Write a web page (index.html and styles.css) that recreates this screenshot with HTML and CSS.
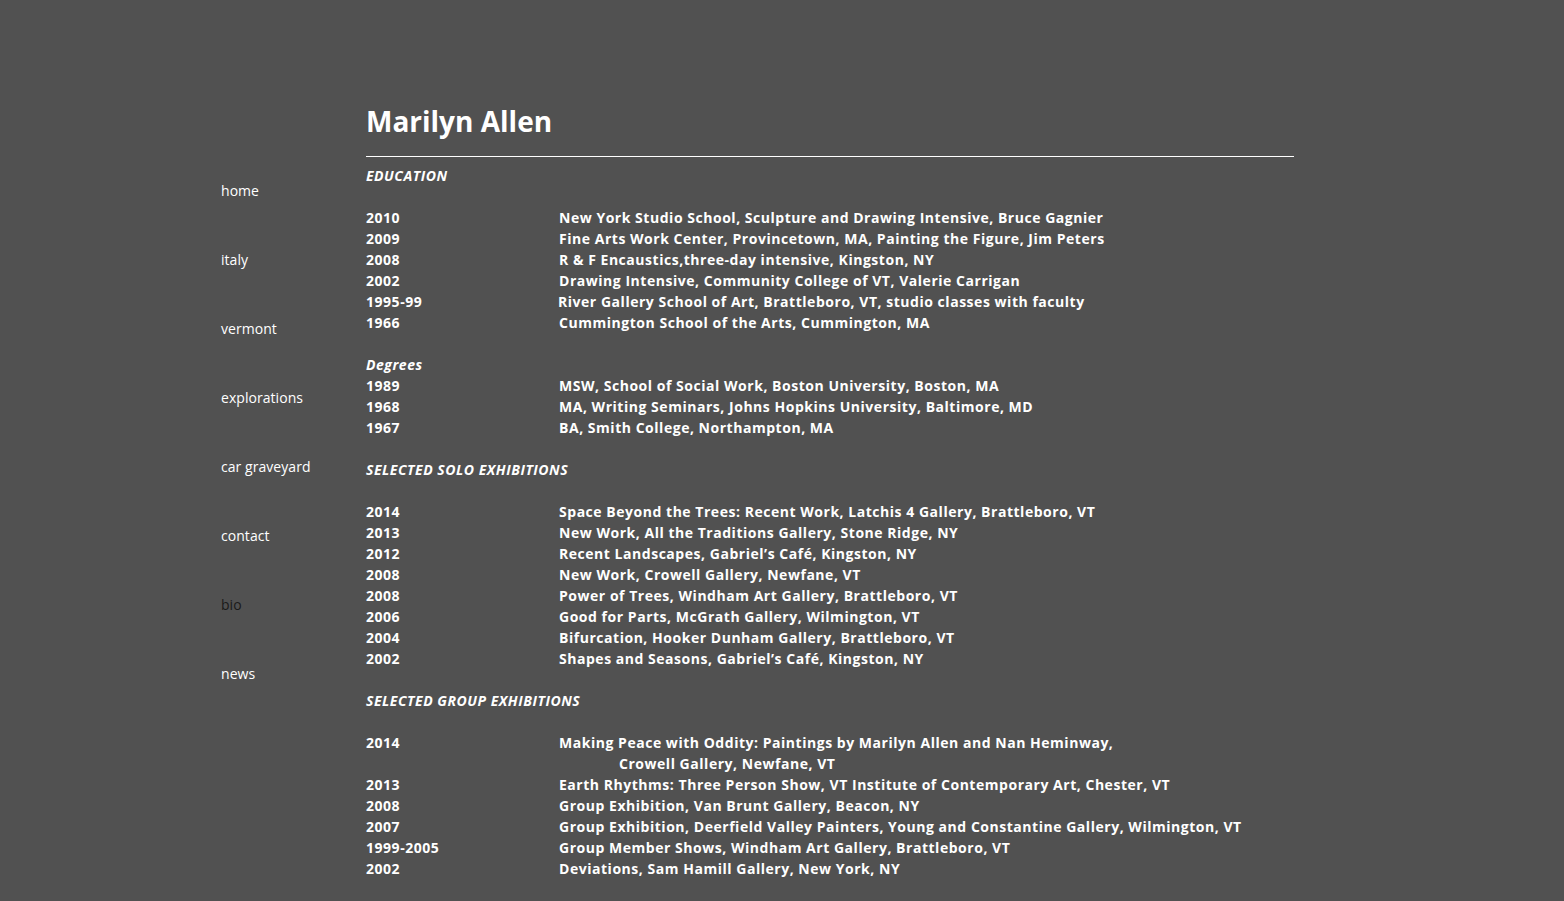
FILE: index.html
```html
<!DOCTYPE html>
<html lang="en">
<head>
<meta charset="utf-8">
<title>Marilyn Allen - bio</title>
<link rel="stylesheet" href="styles.css">
</head>
<body>
<div class="page">
  <nav class="nav">
    <a href="#" class="nav-link">home</a>
    <a href="#" class="nav-link">italy</a>
    <a href="#" class="nav-link">vermont</a>
    <a href="#" class="nav-link">explorations</a>
    <a href="#" class="nav-link">car graveyard</a>
    <a href="#" class="nav-link">contact</a>
    <a href="#" class="nav-link active">bio</a>
    <a href="#" class="nav-link">news</a>
  </nav>
  <main class="main">
    <h1 class="title">Marilyn Allen</h1>
    <hr class="rule">
    <div class="cv">
      <div class="head">EDUCATION</div>
      <div class="blank"></div>
      <div class="row"><span class="yr">2010</span><span class="txt">New York Studio School, Sculpture and Drawing Intensive, Bruce Gagnier</span></div>
      <div class="row"><span class="yr">2009</span><span class="txt">Fine Arts Work Center, Provincetown, MA, Painting the Figure, Jim Peters</span></div>
      <div class="row"><span class="yr">2008</span><span class="txt">R &amp; F Encaustics,three-day intensive, Kingston, NY</span></div>
      <div class="row"><span class="yr">2002</span><span class="txt">Drawing Intensive, Community College of VT, Valerie Carrigan</span></div>
      <div class="row"><span class="yr">1995-99</span><span class="txt shift">River Gallery School of Art, Brattleboro, VT, studio classes with faculty</span></div>
      <div class="row"><span class="yr">1966</span><span class="txt">Cummington School of the Arts, Cummington, MA</span></div>
      <div class="blank"></div>
      <div class="sub">Degrees</div>
      <div class="row"><span class="yr">1989</span><span class="txt">MSW, School of Social Work, Boston University, Boston, MA</span></div>
      <div class="row"><span class="yr">1968</span><span class="txt">MA, Writing Seminars, Johns Hopkins University, Baltimore, MD</span></div>
      <div class="row"><span class="yr">1967</span><span class="txt">BA, Smith College, Northampton, MA</span></div>
      <div class="blank"></div>
      <div class="head">SELECTED SOLO EXHIBITIONS</div>
      <div class="blank"></div>
      <div class="row"><span class="yr">2014</span><span class="txt">Space Beyond the Trees: Recent Work, Latchis 4 Gallery, Brattleboro, VT</span></div>
      <div class="row"><span class="yr">2013</span><span class="txt">New Work, All the Traditions Gallery, Stone Ridge, NY</span></div>
      <div class="row"><span class="yr">2012</span><span class="txt">Recent Landscapes, Gabriel’s Café, Kingston, NY</span></div>
      <div class="row"><span class="yr">2008</span><span class="txt">New Work, Crowell Gallery, Newfane, VT</span></div>
      <div class="row"><span class="yr">2008</span><span class="txt">Power of Trees, Windham Art Gallery, Brattleboro, VT</span></div>
      <div class="row"><span class="yr">2006</span><span class="txt">Good for Parts, McGrath Gallery, Wilmington, VT</span></div>
      <div class="row"><span class="yr">2004</span><span class="txt">Bifurcation, Hooker Dunham Gallery, Brattleboro, VT</span></div>
      <div class="row"><span class="yr">2002</span><span class="txt">Shapes and Seasons, Gabriel’s Café, Kingston, NY</span></div>
      <div class="blank"></div>
      <div class="head">SELECTED GROUP EXHIBITIONS</div>
      <div class="blank"></div>
      <div class="row"><span class="yr">2014</span><span class="txt">Making Peace with Oddity: Paintings by Marilyn Allen and Nan Heminway,<span class="cont">Crowell Gallery, Newfane, VT</span></span></div>
      <div class="row"><span class="yr">2013</span><span class="txt">Earth Rhythms: Three Person Show, VT Institute of Contemporary Art, Chester, VT</span></div>
      <div class="row"><span class="yr">2008</span><span class="txt">Group Exhibition, Van Brunt Gallery, Beacon, NY</span></div>
      <div class="row"><span class="yr">2007</span><span class="txt">Group Exhibition, Deerfield Valley Painters, Young and Constantine Gallery, Wilmington, VT</span></div>
      <div class="row"><span class="yr">1999-2005</span><span class="txt">Group Member Shows, Windham Art Gallery, Brattleboro, VT</span></div>
      <div class="row"><span class="yr">2002</span><span class="txt">Deviations, Sam Hamill Gallery, New York, NY</span></div>
    </div>
  </main>
</div>
</body>
</html>
```

FILE: styles.css
```css
html, body {
  margin: 0;
  padding: 0;
}
body {
  background: #515151;
  color: #ffffff;
  font-family: "Open Sans", "Liberation Sans", sans-serif;
  font-size: 14px;
}
.page {
  width: 1122px;
  margin: 0 auto;
  display: flex;
  padding-top: 100px;
}
.nav {
  width: 145px;
  flex: none;
  display: flex;
  flex-direction: column;
  gap: 50px;
  padding-top: 81px;
}
.nav-link {
  color: #ffffff;
  text-decoration: none;
  line-height: 19px;
  font-size: 14px;
  letter-spacing: 0.05px;
}
.nav-link.active {
  color: #1a1a1a;
}
.main {
  width: 928px;
  flex: none;
}
.title {
  margin: 0;
  font-size: 28px;
  font-weight: 700;
  line-height: 42px;
}
.rule {
  margin: 14px 0 0 0;
  border: 0;
  height: 1px;
  background: #ffffff;
}
.cv {
  padding-top: 8px;
  font-weight: 700;
  line-height: 21px;
  letter-spacing: 0.53px;
}
.head, .sub {
  font-style: italic;
  height: 21px;
}
.blank {
  height: 21px;
}
.row {
  display: flex;
}
.yr {
  width: 193px;
  flex: none;
}
.txt.shift {
  margin-left: -1px;
}
.cont {
  display: block;
  padding-left: 60px;
}
```
